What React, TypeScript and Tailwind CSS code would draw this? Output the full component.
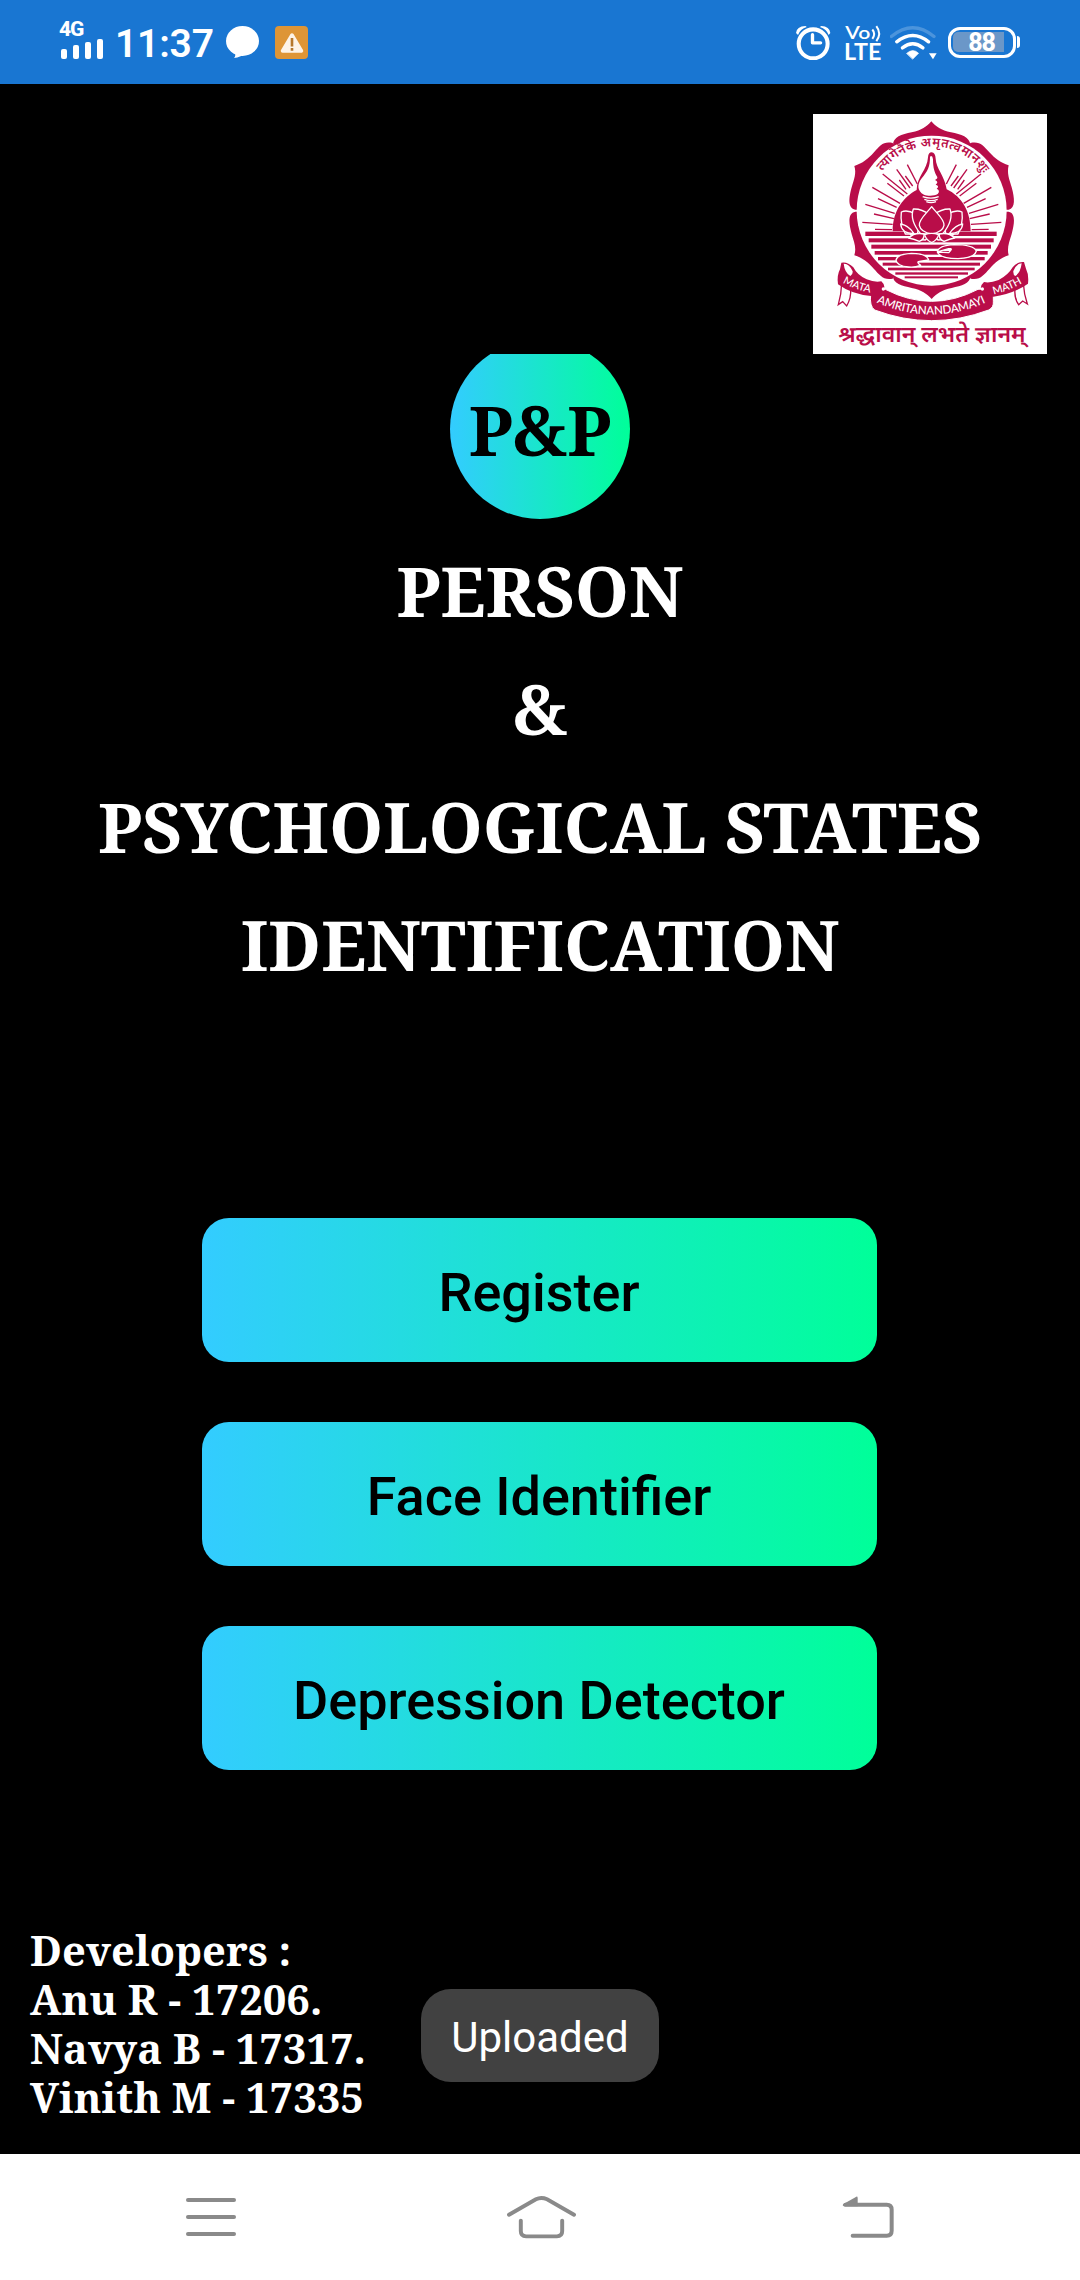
const rays = [
  [322, 194, 352, 252],
  [290, 208, 330, 264],
  [262, 250, 312, 288],
  [248, 222, 322, 282],
  [217, 262, 300, 310],
  [234, 296, 290, 322],
  [196, 313, 284, 340],
  [222, 342, 282, 356],
  [187, 367, 278, 373],
  [225, 388, 276, 389],
  [298, 240, 318, 268],
  [316, 228, 338, 258],
];

const stripes = [
  [395, 196, 590, 13],
  [415, 206, 581, 12],
  [434, 214, 573, 12],
  [453, 224, 563, 11],
  [471, 234, 554, 10],
  [488, 248, 540, 9],
  [503, 264, 524, 8],
  [517, 286, 504, 7],
  [529, 314, 474, 6],
];

function Emblem() {
  return (
    <svg viewBox="39 42 702 720" className="h-[240px] w-[234px] bg-white" fill="#b90d49">
      <defs>
        <path id="motto" d="M247,214 A186,186 0 0 1 548,218" />
        <path id="math" d="M226,606 Q395,682 566,604" />
        <path id="mataLeft" d="M128,548 Q170,572 222,580" />
        <path id="mathRight" d="M581,583 Q630,572 672,546" />
      </defs>

      {/* lotus-petal ring */}
      <path d="M279,136 C279,110 305,104 335,97 C365,91 380,80 394,64 C408,80 423,91 453,97 C483,104 510,110 511,136 L395,332Z" />
      <path d="M279,529 C279,551 305,557 335,564 C365,570 380,581 395,597 C410,581 425,570 455,564 C485,557 511,551 511,529 L395,332Z" />
      <path d="M278,129 C250,123 240,137 222,157 C204,177 188,190 163,198 C170,220 162,238 155,262 C146,295 143,325 166,329 L395,332Z" />
      <path d="M511,129 C540,123 550,137 568,157 C586,177 602,188 626,196 C620,220 628,238 635,262 C644,295 647,325 626,329 L395,332Z" />
      <path d="M278,536 C250,542 238,524 222,507 C204,487 188,474 163,466 C170,444 162,426 155,402 C146,369 143,339 166,335 L395,332Z" />
      <path d="M512,536 C540,542 552,524 568,507 C586,487 602,474 626,466 C620,444 628,426 635,402 C644,369 647,339 626,335 L395,332Z" />
      <circle cx="395" cy="332" r="225" fill="#fff" />

      <text fontFamily='"Noto Sans Devanagari", "Noto Sans", sans-serif' fontSize="38" fontWeight="600">
        <textPath href="#motto" textLength="354">त्यागेनैके अमृतत्वमानशुः</textPath>
      </text>

      {/* sun, rays and flame-shaped hand */}
      <g stroke="#b90d49" strokeWidth="4">
        {rays.map(([x1, y1, x2, y2], i) => (
          <g key={i}>
            <line x1={x1} y1={y1} x2={x2} y2={y2} />
            <line x1={791 - x1} y1={y1} x2={791 - x2} y2={y2} />
          </g>
        ))}
      </g>
      <path d="M278,394 C278,330 312,290 350,270 C350,230 382,210 384,172 Q385,157 395,157 Q406,158 407,176 C408,206 434,226 440,268 C486,290 512,334 512,394Z" />
      <path fill="#fff" d="M390,170 Q397,164 399,178 C399,205 404,216 410,228 Q416,235 405,240 Q418,246 407,254 Q420,258 410,266 Q422,272 413,282 C404,288 384,289 372,284 C350,272 352,252 364,236 C384,212 390,200 390,170Z" />
      <path stroke="#fff" strokeWidth="4" fill="none" d="M368,290 Q393,299 416,290M373,298 Q393,306 413,298M379,305 Q393,311 408,305" />

      {/* water */}
      {stripes.map(([y, x1, x2, h]) => (
        <rect key={y} x={x1} y={y} width={x2 - x1} height={h} />
      ))}

      {/* lotus and lily pads */}
      <g stroke="#fff" strokeWidth="4" strokeLinejoin="round">
        <path d="M330,402 Q340,420 376,420 L395,400 L414,420 Q452,420 462,402Z" />
        <path d="M316,402 Q300,370 304,336 Q322,328 346,342 Q362,376 352,402Z" />
        <path d="M474,402 Q490,370 486,336 Q468,328 444,342 Q428,376 438,402Z" />
        <path d="M362,402 Q328,360 340,327 Q366,326 388,344 L392,402Z" />
        <path d="M428,402 Q462,360 450,327 Q424,326 402,344 L398,402Z" />
        <path d="M395,320 C380,340 356,358 358,376 Q362,396 395,402 Q428,396 432,376 C434,358 410,340 395,320Z" />
        <path d="M302,372 Q326,376 342,401 Q304,400 302,372ZM488,372 Q464,376 448,401 Q486,400 488,372Z" />
        <path d="M326,414 Q344,396 372,402 Q374,418 358,424Q340,416 326,414ZM464,414 Q446,396 418,402 Q416,418 432,424Q450,416 464,414Z" />
        <path d="M374,404 Q395,396 416,404 Q412,420 395,428 Q378,420 374,404Z" />
        <path d="M412,456 Q416,436 462,434 Q520,434 529,453 Q524,474 474,476 Q420,476 412,456 L446,458 Q462,444 446,446Z" />
        <path d="M288,480 Q292,462 334,460 Q380,460 386,480 L358,484 Q348,486 362,496 Q344,503 326,501 Q290,498 288,480Z" />
      </g>

      {/* ribbon */}
      <g stroke="#b90d49" strokeWidth="4" fill="#fff">
        <path d="M125,550 Q124,584 115,614 L128,605 L140,618 Q154,594 152,566Z" />
        <path d="M670,550 Q672,584 682,612 L668,603 L656,614 Q642,594 645,566Z" />
      </g>
      <path stroke="#fff" strokeWidth="3" d="M212,584 Q232,564 256,568 Q395,640 534,568 Q560,564 580,582 L580,604 Q582,622 566,630 Q395,694 224,630 Q208,618 212,584Z" />
      <path d="M124,488 Q142,484 160,502 Q172,526 200,538 Q224,548 244,544 Q262,560 244,580 Q232,590 214,588 Q156,584 114,553 Q110,526 120,508Z" />
      <path d="M672,486 Q652,484 638,502 Q624,526 596,540 Q570,550 552,546 Q534,562 550,580 Q562,590 580,590 Q640,582 684,551 Q687,524 678,506Z" />
      <path fill="#fff" d="M131,491 Q148,490 158,514 Q159,524 151,528 Q134,518 131,491ZM665,490 Q649,491 640,513 Q639,524 646,528 Q662,518 665,490Z" />
      <circle cx="250" cy="567" r="5" fill="#fff" />
      <circle cx="547" cy="567" r="5" fill="#fff" />
      <g fill="#fff" fontFamily="Lato, sans-serif" fontSize="32" fontWeight="500">
        <text><textPath href="#mataLeft" textLength="88">MATA</textPath></text>
        <text><textPath href="#mathRight" textLength="92">MATH</textPath></text>
        <text fontSize="35"><textPath href="#math" startOffset="4" textLength="338">AMRITANANDAMAYI</textPath></text>
      </g>

      <text x="115" y="726" textLength="562" lengthAdjust="spacingAndGlyphs" fontFamily='"Noto Sans Devanagari", "Noto Sans", sans-serif' fontSize="66" fontWeight="600">
        श्रद्धावान् लभते ज्ञानम्
      </text>
    </svg>
  );
}

function SignalIcon() {
  return (
    <svg viewBox="0 0 43 20" className="h-5 w-[43px]" fill="#fff">
      <rect x="1" y="10" width="6" height="10" rx="2" />
      <rect x="13" y="6" width="6" height="14" rx="2" />
      <rect x="25" y="3" width="6" height="17" rx="2" />
      <rect x="37" y="0" width="6" height="20" rx="2" />
    </svg>
  );
}

function StatusBar() {
  return (
    <header className="flex h-[84px] items-center bg-[#1976d2] font-[Roboto,sans-serif] text-white">
      <div className="ml-[60px] flex w-[55px] flex-col">
        <span className="-mt-1 -ml-px mb-px text-[21px] leading-[17px] font-extrabold tracking-[-1px]">4G</span>
        <SignalIcon />
      </div>
      <span className="w-[100px] pt-[3px] text-[39px] leading-10 font-semibold tracking-[-0.2px] whitespace-nowrap">11:37</span>
      <svg viewBox="0 0 34 34" className="ml-[11px] h-[34px] w-[34px]" fill="#fff">
        <ellipse cx="16.500" cy="16" rx="16.500" ry="15" />
        <path d="M9,27 Q10,31 8,33 Q15,32 18,29Z" />
      </svg>
      <svg viewBox="0 0 33 33" className="ml-[15px] h-[33px] w-[33px]">
        <rect width="33" height="33" rx="4" fill="#de9536" />
        <path d="M17,9 L26.500,25 H7.500Z" fill="#fdf3e7" stroke="#fdf3e7" strokeWidth="3.500" strokeLinejoin="round" />
        <path d="M15.700,12 h2.600 v8.500 h-2.600ZM15.700,22 h2.600 v2.700 h-2.600Z" fill="#b5772c" />
      </svg>
      <div className="flex-1" />
      <svg viewBox="48 74 104 104" className="h-[35px] w-[35px]" fill="none" stroke="#fff">
        <circle cx="99" cy="130" r="43" strokeWidth="12" />
        <path d="M97,103 V127 H121" strokeWidth="10" strokeLinecap="round" strokeLinejoin="round" />
        <path d="M48,98 Q50,78 76,77 L80,80 Q60,86 54,104ZM150,98 Q148,78 123,77 L119,80 Q139,86 145,104Z" fill="#fff" stroke="none" />
      </svg>
      <svg viewBox="194 72 108 110" className="ml-[14px] h-[37px] w-9 overflow-visible" fill="#fff" fontFamily="Lato, sans-serif">
        <text x="195" y="116" fontSize="54" fontWeight="600" textLength="75" lengthAdjust="spacingAndGlyphs">Vo</text>
        <path d="M276,88 Q287,101 276,116M288,78 Q305,100 288,123" fill="none" stroke="#fff" strokeWidth="6" />
        <text x="191" y="180" fontSize="69" fontWeight="700" textLength="112" lengthAdjust="spacingAndGlyphs">LTE</text>
      </svg>
      <svg viewBox="330 72 140 104" className="ml-[9px] h-[35px] w-[47px]" fill="none" stroke="#fff" strokeWidth="10" strokeLinecap="round">
        <path d="M334,106 Q398,54 461,106" opacity=".22" />
        <path d="M350,122 Q398,84 445,122" />
        <path d="M367,140 Q398,116 428,140" />
        <path d="M380,156 Q398,140 415,156 L398,173Z" fill="#fff" stroke="#fff" strokeWidth="2" />
        <path d="M446,156 H469 L458,174Z" fill="#fff" stroke="none" />
      </svg>
      <div className="ml-[11px] flex h-[31px] w-[68px] items-center rounded-[12px] border-3 border-white pl-[2px]">
        <div className="flex h-[20px] w-[51px] items-center justify-end rounded-l-[5px] bg-[#6b97c8] pr-[9px] text-[25px] leading-none font-extrabold tracking-[-1px]">
          <span>88</span>
        </div>
      </div>
      <div className="mr-[60px] ml-px h-3 w-[3px] rounded-r-full bg-white" />
    </header>
  );
}

function ActionButton({ label }: { label: string }) {
  return (
    <button className="flex h-36 w-[675px] items-center justify-center rounded-[27px] bg-linear-to-r/srgb from-[#33ccff] to-[#00ff99] pt-[4px] font-[Roboto,sans-serif] text-[54px] font-medium text-black">
      {label}
    </button>
  );
}

export default function App() {
  return (
    <div className="flex h-[2280px] w-[1080px] flex-col overflow-hidden bg-black">
      <StatusBar />

      <main className="relative flex flex-1 flex-col font-['Noto_Serif',serif] font-bold text-white">
        <div className="flex justify-end pt-[30px] pr-[33px]">
          <Emblem />
        </div>
        <div className="flex h-[165px] justify-center overflow-hidden">
          <div className="-mt-[15px] flex h-[180px] w-[180px] shrink-0 items-center justify-center rounded-full bg-linear-to-r/srgb from-[#33ccff] to-[#00ff99] pt-px text-[69px] leading-none text-black">
            P&amp;P
          </div>
        </div>
        <h1 className="mt-[12px] text-center text-[69px] leading-[118px] whitespace-nowrap">
          PERSON
          <br />
          &amp;
          <br />
          PSYCHOLOGICAL STATES
          <br />
          IDENTIFICATION
        </h1>
        <div className="mt-[215px] mr-[2px] flex flex-col items-center gap-[60px]">
          <ActionButton label="Register" />
          <ActionButton label="Face Identifier" />
          <ActionButton label="Depression Detector" />
        </div>
        <p className="mt-[155px] ml-[30px] text-[41.7px] leading-[49px]">
          Developers :<br />
          Anu R - 17206.
          <br />
          Navya B - 17317.
          <br />
          Vinith M - 17335
        </p>
        <div className="absolute bottom-[72px] left-1/2 flex h-[93px] w-[238px] -translate-x-1/2 items-center justify-center rounded-[30px] bg-[#414141] pt-[3px] font-[Roboto,sans-serif] text-[42px] font-normal">
          Uploaded
        </div>
      </main>

      <nav className="flex h-[126px] items-center justify-between bg-white px-[186px] text-[#8a8a8a]">
        <div className="flex w-[50px] flex-col gap-[13px]">
          <span className="h-1 rounded-full bg-current" />
          <span className="h-1 rounded-full bg-current" />
          <span className="h-1 rounded-full bg-current" />
        </div>
        <svg viewBox="46 72 214 134" className="ml-[5px] h-[44px] w-[71px]" fill="none" stroke="currentColor" strokeWidth="12" strokeLinecap="round">
          <path d="M54,132 L136,85 Q152,77 170,85 L252,132" />
          <path d="M90,150 V182 Q90,198 106,198 H200 Q216,198 216,182 V150" />
        </svg>
        <svg viewBox="52 73 156 126" className="h-[42px] w-[52px]" fill="none" stroke="currentColor" strokeWidth="12" strokeLinecap="round">
          <path d="M62,99 H186 Q201,99 201,114 V177 Q201,192 186,192 H84" />
          <path d="M55,98 L95,75 Q99,74 99,79 V104 H58 Q52,102 55,98Z" fill="currentColor" stroke="none" />
        </svg>
      </nav>
    </div>
  );
}
